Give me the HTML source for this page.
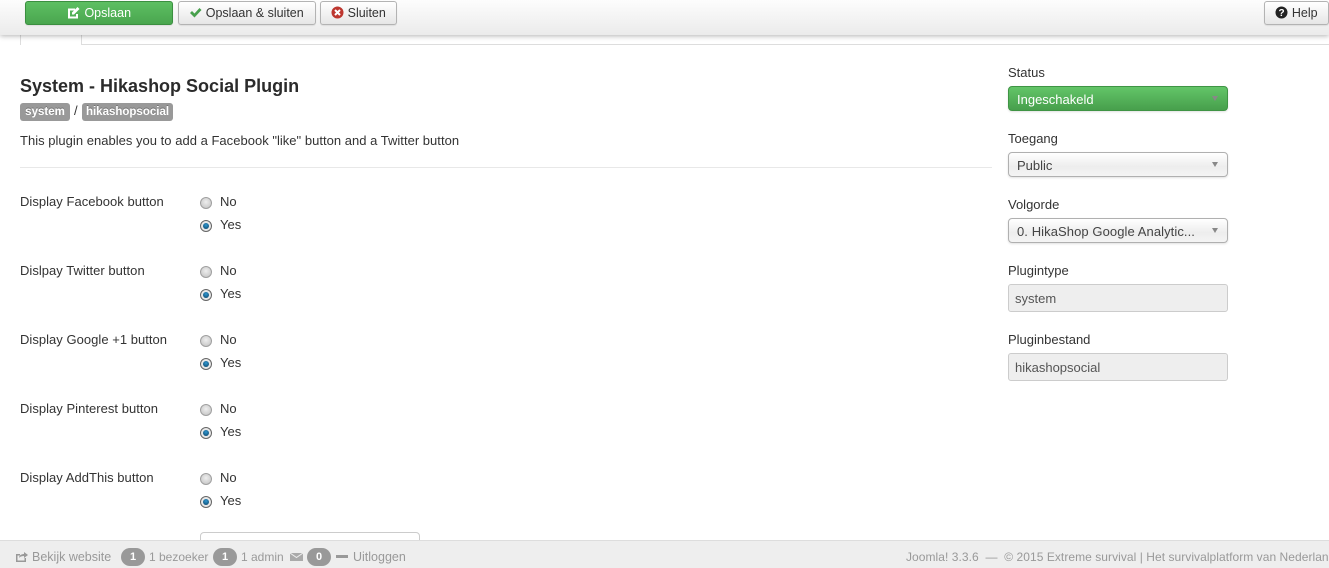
<!DOCTYPE html>
<html><head><meta charset="utf-8"><style>
html,body{margin:0;padding:0;width:1329px;height:568px;overflow:hidden;background:#fff;font-family:"Liberation Sans",Arial,sans-serif;font-size:13px;color:#333}
.a{position:absolute;white-space:nowrap;line-height:18px}
.btn{position:absolute;top:1px;height:24px;box-sizing:border-box;border:1px solid #b3b3b3;border-radius:3px;background:linear-gradient(#fff,#e6e6e6);line-height:23px;font-size:12.500px;color:#333;white-space:nowrap;text-align:center;box-shadow:0 1px 1px rgba(0,0,0,.08)}
.l{position:absolute;left:20px;line-height:18px;white-space:nowrap;letter-spacing:.03px}
.r{position:absolute;width:12px;height:12px;box-sizing:border-box;border-radius:50%;left:200px;border:1px solid #a0a0a0;background:radial-gradient(circle at 50% 40%,#eee,#bfbfbf)}
.r.on{background:#e8e8e8;border-color:#666}
.r.on:after{content:"";position:absolute;left:2px;top:2px;width:6px;height:6px;border-radius:50%;background:radial-gradient(circle at 50% 35%,#2f97d0,#0a3f62)}
.t{position:absolute;left:220px;line-height:18px}
.sel{position:absolute;left:1008px;width:220px;height:25px;box-sizing:border-box;border:1px solid #b0b0b0;border-radius:4px;background:linear-gradient(#fff,#ededed 60%,#f4f4f4);line-height:25px;padding-left:8px;box-shadow:0 1px 2px rgba(0,0,0,.12);color:#444}
.sel:after{content:"";position:absolute;right:9px;top:9px;border:3.500px solid transparent;border-top:5px solid #888;border-bottom:0}
.inp{position:absolute;left:1008px;width:220px;height:28px;box-sizing:border-box;border:1px solid #ccc;border-radius:3px;background:#eee;line-height:27px;padding-left:6px;color:#555}
.lab{position:absolute;left:1008px;line-height:18px;color:#333}
.tag{position:absolute;top:103px;height:18px;background:#999;border-radius:3px;color:#fff;font-weight:bold;font-size:11.500px;line-height:18px;text-align:center;text-shadow:0 -1px 0 rgba(0,0,0,.25)}
.f{position:absolute;top:548px;line-height:18px;color:#999;white-space:nowrap;font-size:12px}
.b{position:absolute;top:548px;height:18px;width:24px;border-radius:9px;background:#999;color:#fff;text-align:center;line-height:18px;font-weight:bold;font-size:11px}
</style></head><body>

<div style="position:absolute;left:20px;top:35px;width:62px;height:10px;box-sizing:border-box;border-left:1px solid #ddd;border-right:1px solid #ddd"></div>
<div style="position:absolute;left:82px;top:44px;width:1247px;height:1px;background:#ddd"></div>

<div style="position:absolute;left:0;top:0;width:1329px;height:35px;background:linear-gradient(#fdfdfd,#ebebeb);box-shadow:0 1px 5px rgba(0,0,0,.3)"></div>

<div class="btn" style="left:25px;width:148px;background:linear-gradient(#5dbf62,#4aa64f);border-color:#3b8f40;color:#fff">
<svg width="13" height="13" viewBox="0 0 13 13" style="vertical-align:-2px;margin-right:1px"><path d="M1 2.500h7v2H3v6h6V8h2v4.500H1z" fill="#fff"/><path d="M5 6.500 10.500 1l2 2L7 8.500H5z" fill="#fff"/></svg> Opslaan</div>
<div class="btn" style="left:178px;width:138px;padding-right:1px"><svg width="13" height="11" viewBox="0 0 13 11" style="vertical-align:-1px"><path d="M1 6l2-2 2.500 2.500L10.500 1l2 2-7 7.500z" fill="#47a04c"/></svg> Opslaan &amp; sluiten</div>
<div class="btn" style="left:320px;width:77px"><svg width="13" height="13" viewBox="0 0 13 13" style="vertical-align:-2px"><circle cx="6.500" cy="6.500" r="6" fill="#bd362f"/><path d="M4 4l5 5M9 4l-5 5" stroke="#fff" stroke-width="2"/></svg> Sluiten</div>
<div class="btn" style="left:1264px;width:65px"><svg width="13" height="13" viewBox="0 0 13 13" style="vertical-align:-2px"><circle cx="6.500" cy="6.500" r="6" fill="#222"/><text x="6.500" y="10" font-size="10" font-weight="bold" text-anchor="middle" fill="#fff" font-family="Liberation Sans">?</text></svg> Help</div>

<div class="a" style="left:20px;top:75px;font-size:18px;font-weight:bold;line-height:22px;color:#2b2b2b">System - Hikashop Social Plugin</div>
<div class="tag" style="left:20px;width:50px">system</div>
<div class="a" style="left:74px;top:102px">/</div>
<div class="tag" style="left:82px;width:91px">hikashopsocial</div>
<div class="a" style="left:20px;top:132px;letter-spacing:.02px">This plugin enables you to add a Facebook "like" button and a Twitter button</div>
<div style="position:absolute;left:20px;top:167px;width:972px;height:1px;background:#e8e8e8"></div>

<div class="l" style="top:193px">Display Facebook button</div>
<div class="r" style="top:197px"></div><div class="t" style="top:193px">No</div>
<div class="r on" style="top:220px"></div><div class="t" style="top:216px">Yes</div>

<div class="l" style="top:262px">Dislpay Twitter button</div>
<div class="r" style="top:266px"></div><div class="t" style="top:262px">No</div>
<div class="r on" style="top:289px"></div><div class="t" style="top:285px">Yes</div>

<div class="l" style="top:331px">Display Google +1 button</div>
<div class="r" style="top:335px"></div><div class="t" style="top:331px">No</div>
<div class="r on" style="top:358px"></div><div class="t" style="top:354px">Yes</div>

<div class="l" style="top:400px">Display Pinterest button</div>
<div class="r" style="top:404px"></div><div class="t" style="top:400px">No</div>
<div class="r on" style="top:427px"></div><div class="t" style="top:423px">Yes</div>

<div class="l" style="top:469px">Display AddThis button</div>
<div class="r" style="top:473px"></div><div class="t" style="top:469px">No</div>
<div class="r on" style="top:496px"></div><div class="t" style="top:492px">Yes</div>

<div style="position:absolute;left:200px;top:532px;width:220px;height:20px;box-sizing:border-box;border:1px solid #ccc;border-radius:4px"></div>

<div class="lab" style="top:64px">Status</div>
<div class="sel" style="top:86px;background:linear-gradient(#63c568,#479f4c);border-color:#3f9444;color:#fff">Ingeschakeld</div>
<div class="lab" style="top:130px">Toegang</div>
<div class="sel" style="top:152px">Public</div>
<div class="lab" style="top:196px">Volgorde</div>
<div class="sel" style="top:218px"><span style="letter-spacing:.08px">0. HikaShop Google Analytic...</span></div>
<div class="lab" style="top:262px">Plugintype</div>
<div class="inp" style="top:284px">system</div>
<div class="lab" style="top:331px">Pluginbestand</div>
<div class="inp" style="top:353px">hikashopsocial</div>

<div style="position:absolute;left:0;top:540px;width:1329px;height:28px;background:#eee;border-top:1px solid #ddd;box-sizing:border-box"></div>
<svg style="position:absolute;left:15px;top:551px" width="13" height="11" viewBox="0 0 13 11"><path d="M1 3h4v1.500H2.500v5h7V7H11v4H1z" fill="#999"/><path d="M4 7c0-3 3-4 5-4V1l4 3-4 3V5C7 5 5 5.500 4 7z" fill="#999"/></svg>
<div class="f" style="left:32px;font-size:12.500px">Bekijk website</div>
<div class="b" style="left:121px">1</div>
<div class="f" style="left:149px">1 bezoeker</div>
<div class="b" style="left:213px">1</div>
<div class="f" style="left:241px">1 admin</div>
<svg style="position:absolute;left:290px;top:553px" width="13" height="8" viewBox="0 0 13 8"><rect width="13" height="8" fill="#aaa"/><path d="M0 0l6.500 4.500L13 0" stroke="#eee" fill="none"/></svg>
<div class="b" style="left:307px">0</div>
<div style="position:absolute;left:336px;top:555px;width:12px;height:3px;background:#999"></div>
<div class="f" style="left:353px;font-size:12.500px">Uitloggen</div>
<div class="f" style="left:906px;letter-spacing:.05px">Joomla! 3.3.6 &nbsp;— &nbsp;© 2015 Extreme survival | Het survivalplatform van Nederland</div>

</body></html>
